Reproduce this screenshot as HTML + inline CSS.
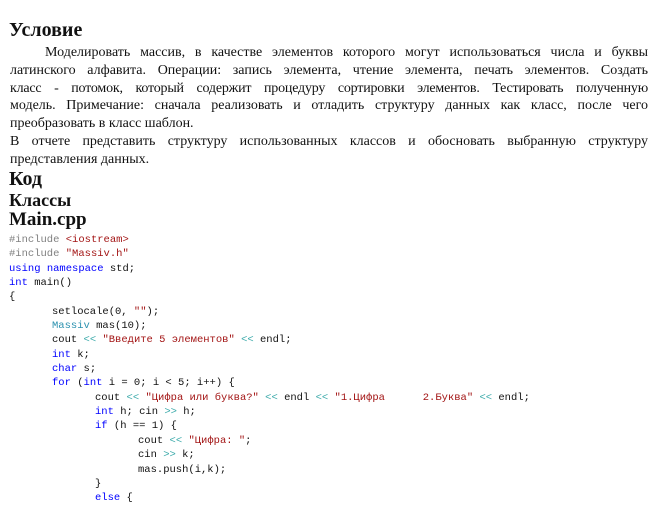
<!DOCTYPE html>
<html><head><meta charset="utf-8"><style>
body{margin:0;width:666px;height:498px;overflow:hidden;background:#fff;font-family:"Liberation Serif",serif;color:#111}
.h{position:absolute;left:9px;font-weight:bold;white-space:nowrap}
.p{position:absolute;left:10px;width:638px;font-size:14px;line-height:17.8px;top:44px}
.p div{text-align:justify;text-align-last:justify;white-space:nowrap;overflow:hidden}
.p div.l{text-align-last:left}
.c{position:absolute;left:9px;font-family:"Liberation Mono",monospace;font-size:10.5px;line-height:14.35px;top:233px;white-space:pre;color:#111}
.g{color:#808080}.r{color:#a31515}.b{color:#0000ff}.t{color:#2b91af}.o{color:#39a9a9}
.i1{padding-left:43px}.i2{padding-left:86px}.i3{padding-left:129px}
</style></head><body>
<div class="h" style="top:19px;font-size:20px">Условие</div>
<div class="p">
<div><span style="padding-left:35px"></span>Моделировать массив, в качестве элементов которого могут использоваться числа и буквы</div>
<div>латинского алфавита. Операции: запись элемента, чтение элемента, печать элементов. Создать</div>
<div style="letter-spacing:-0.2px">класс - потомок, который содержит процедуру сортировки элементов. Тестировать полученную</div>
<div>модель. Примечание: сначала реализовать и отладить структуру данных как класс, после чего</div>
<div class="l">преобразовать в класс шаблон.</div>
<div>В отчете представить структуру использованных классов и обосновать выбранную структуру</div>
<div class="l">представления данных.</div>
</div>
<div class="h" style="top:168px;font-size:20px">Код</div>
<div class="h" style="top:190px;font-size:18px">Классы</div>
<div class="h" style="top:209px;font-size:19px">Main.cpp</div>
<div class="c"><span class="g">#include</span> <span class="r">&lt;iostream&gt;</span>
<span class="g">#include</span> <span class="r">"Massiv.h"</span>
<span class="b">using</span> <span class="b">namespace</span> std;
<span class="b">int</span> main()
{
<span class="i1">setlocale(0, <span class="r">""</span>);</span>
<span class="i1"><span class="t">Massiv</span> mas(10);</span>
<span class="i1">cout <span class="o">&lt;&lt;</span> <span class="r">"Введите 5 элементов"</span> <span class="o">&lt;&lt;</span> endl;</span>
<span class="i1"><span class="b">int</span> k;</span>
<span class="i1"><span class="b">char</span> s;</span>
<span class="i1"><span class="b">for</span> (<span class="b">int</span> i = 0; i &lt; 5; i++) {</span>
<span class="i2">cout <span class="o">&lt;&lt;</span> <span class="r">"Цифра или буква?"</span> <span class="o">&lt;&lt;</span> endl <span class="o">&lt;&lt;</span> <span class="r">"1.Цифра      2.Буква"</span> <span class="o">&lt;&lt;</span> endl;</span>
<span class="i2"><span class="b">int</span> h; cin <span class="o">&gt;&gt;</span> h;</span>
<span class="i2"><span class="b">if</span> (h == 1) {</span>
<span class="i3">cout <span class="o">&lt;&lt;</span> <span class="r">"Цифра: "</span>;</span>
<span class="i3">cin <span class="o">&gt;&gt;</span> k;</span>
<span class="i3">mas.push(i,k);</span>
<span class="i2">}</span>
<span class="i2"><span class="b">else</span> {</span>
</div>
</body></html>
